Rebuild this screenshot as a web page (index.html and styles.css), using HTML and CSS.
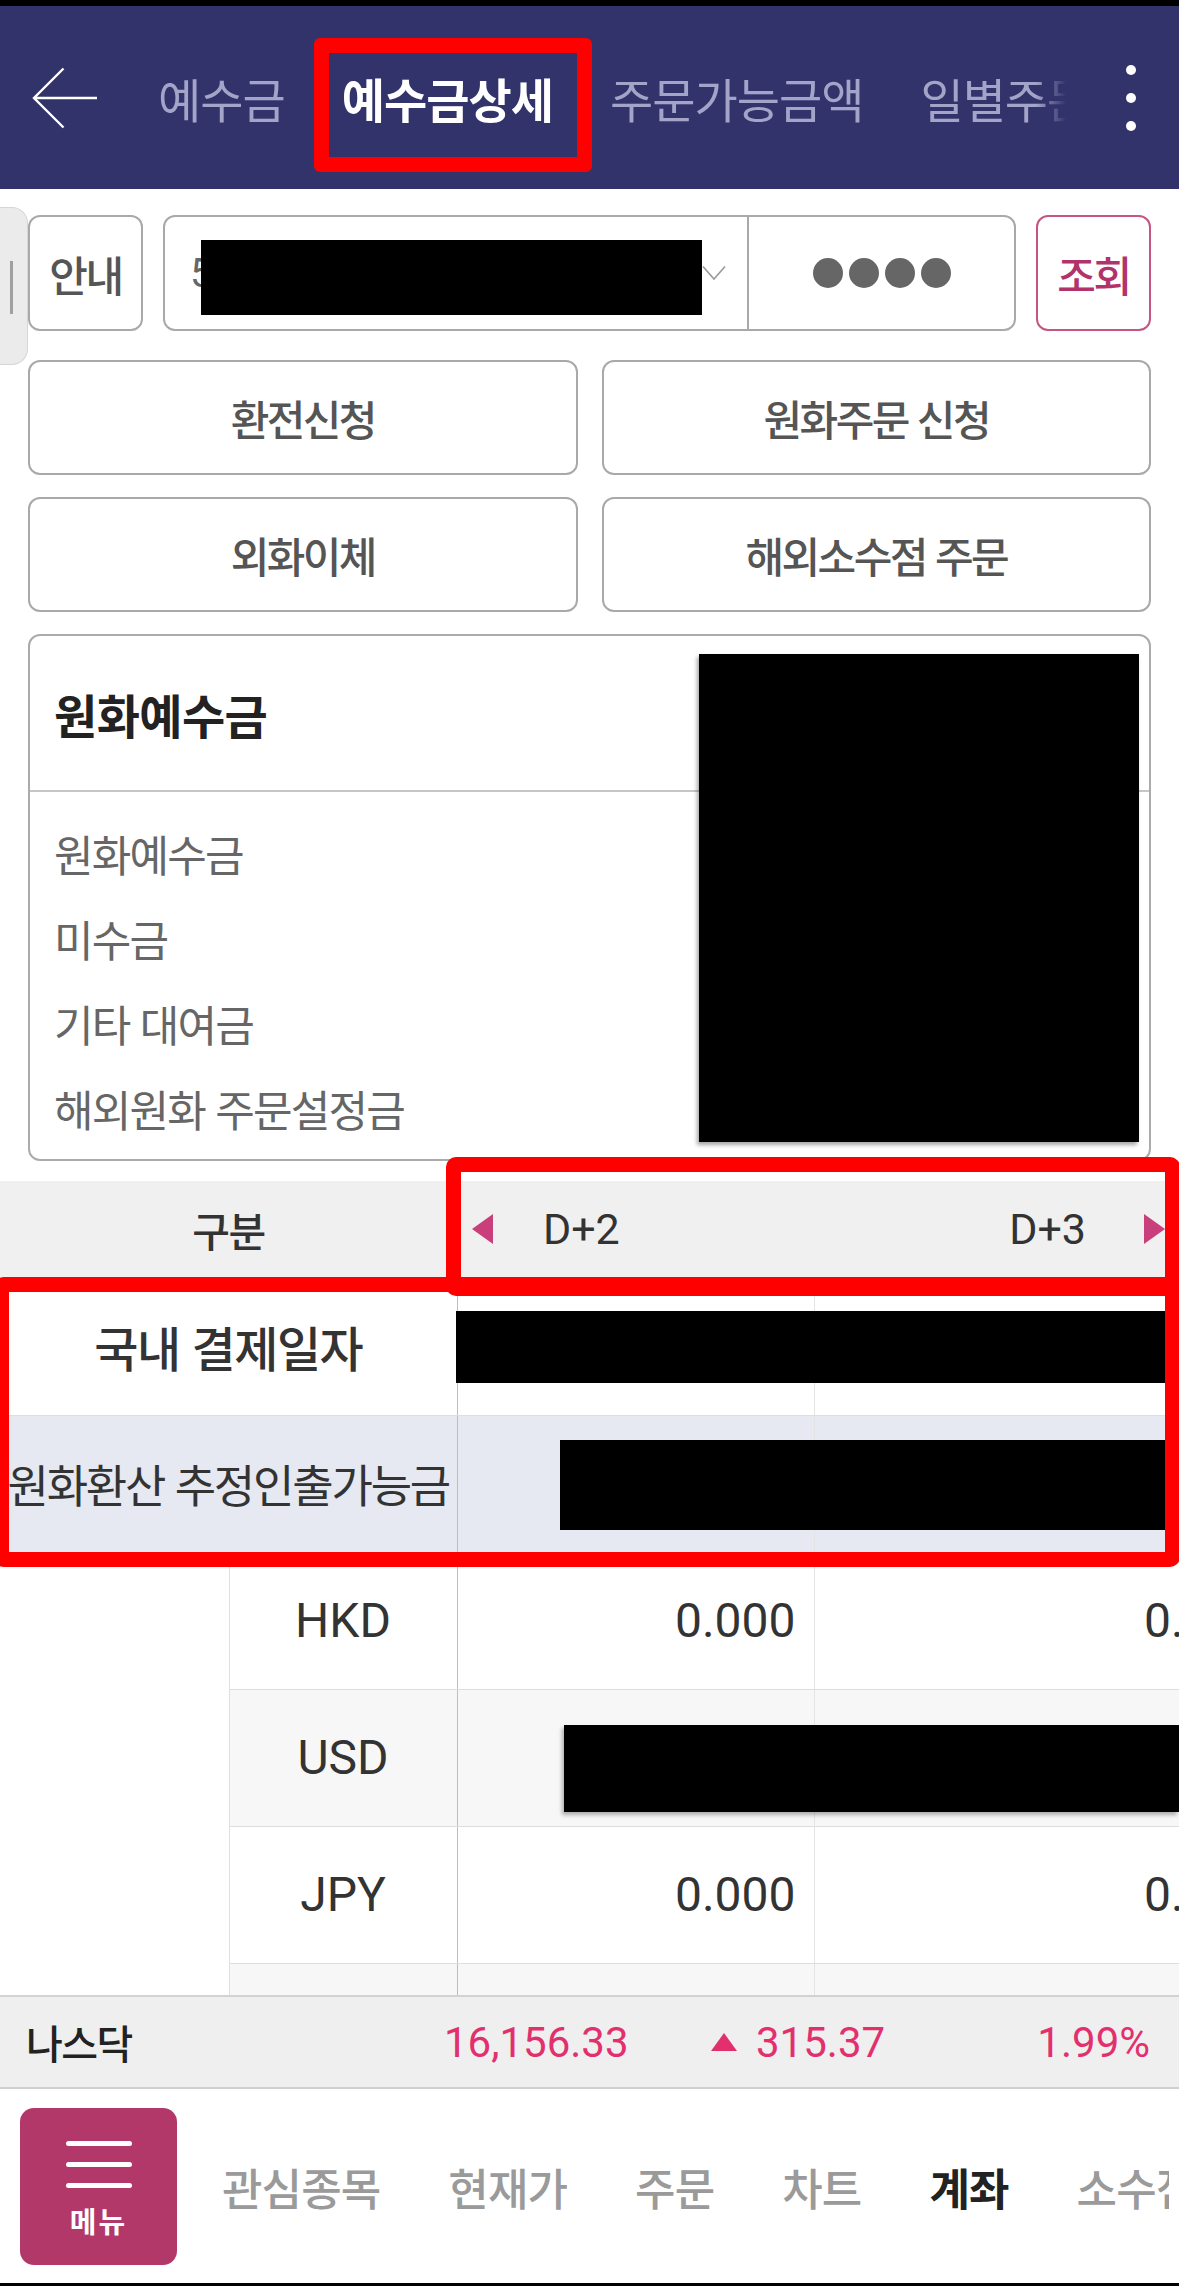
FILE: index.html
```html
<!DOCTYPE html>
<html lang="ko">
<head>
    <meta charset="utf-8">
    <title>예수금상세</title>
    <link rel="stylesheet" href="styles.css">
</head>
<body>
<div class="screen">
    <div class="status"></div>

    <header class="appbar">
        <svg class="back" width="66" height="62" viewBox="0 0 66 62">
            <path d="M65 31H2M31.5 1.5L2 31L31.5 60.5" fill="none" stroke="#fff" stroke-width="2.4"/>
        </svg>
        <nav class="tabs">
            <span class="tab">예수금</span>
            <span class="tab active">예수금상세</span>
            <span class="tab">주문가능금액</span>
            <span class="tab">일별주문체결</span>
        </nav>
        <div class="kebab"><i></i><i></i><i></i></div>
    </header>

    <main class="content">
        <div class="account-row">
            <button class="btn info">안내</button>
            <div class="account-box">
                <div class="account-select">
                    <span class="acct-no">5</span>
                    <svg class="chevron" width="24" height="16" viewBox="0 0 24 16">
                        <path d="M1 1.5L12 14L23 1.5" fill="none" stroke="#999" stroke-width="1.6"/>
                    </svg>
                    <div class="mask acct-mask"></div>
                </div>
                <div class="account-pw"><i></i><i></i><i></i><i></i></div>
            </div>
            <button class="btn search">조회</button>
        </div>

        <div class="quick">
            <button class="btn">환전신청</button>
            <button class="btn">원화주문 신청</button>
            <button class="btn">외화이체</button>
            <button class="btn">해외소수점 주문</button>
        </div>

        <section class="card">
            <div class="card-head">원화예수금</div>
            <ul class="card-list">
                <li>원화예수금</li>
                <li>미수금</li>
                <li>기타 대여금</li>
                <li>해외원화 주문설정금</li>
            </ul>
            <div class="mask card-mask"></div>
        </section>
    </main>

    <section class="sheet">
        <div class="sheet-head">
            <div class="label">구분</div>
            <div class="days">
                <svg width="21" height="30" viewBox="0 0 21 30"><path d="M21 0V30L0 15Z" fill="#c93f7b"/></svg>
                <span class="d2">D+2</span>
                <span class="d3">D+3</span>
                <svg width="21" height="30" viewBox="0 0 21 30"><path d="M0 0V30L21 15Z" fill="#c93f7b"/></svg>
            </div>
        </div>

        <table class="grid">
            <colgroup>
                <col class="w-blank"><col class="w-cur"><col class="w-d2"><col class="w-d3">
            </colgroup>
            <tbody>
                <tr class="row-date">
                    <td class="name lead strong" colspan="2">국내 결제일자</td>
                    <td class="val"></td>
                    <td class="val"></td>
                </tr>
                <tr class="row-krw">
                    <td class="name lead" colspan="2">원화환산 추정인출가능금</td>
                    <td class="val"></td>
                    <td class="val"></td>
                </tr>
                <tr class="row-cur">
                    <td class="blank" rowspan="4"></td>
                    <td class="cur lead">HKD</td>
                    <td class="val">0.000</td>
                    <td class="val">0.000</td>
                </tr>
                <tr class="row-cur alt">
                    <td class="cur lead">USD</td>
                    <td class="val"></td>
                    <td class="val"></td>
                </tr>
                <tr class="row-cur">
                    <td class="cur lead">JPY</td>
                    <td class="val">0.000</td>
                    <td class="val">0.000</td>
                </tr>
                <tr class="row-cur alt">
                    <td class="cur lead">EUR</td>
                    <td class="val">0.000</td>
                    <td class="val">0.000</td>
                </tr>
            </tbody>
        </table>

        <div class="mask sheet-mask-1"></div>
        <div class="mask sheet-mask-2"></div>
        <div class="mask sheet-mask-3"></div>
    </section>

    <div class="index">
        <span class="idx-name">나스닥</span>
        <span class="idx-value">16,156.33</span>
        <span class="idx-change">
            <svg width="26" height="18" viewBox="0 0 26 18"><path d="M13 0L26 18H0Z" fill="#e2306e"/></svg>
            315.37
        </span>
        <span class="idx-rate">1.99%</span>
    </div>

    <footer class="bottom-nav">
        <div class="menu-btn">
            <i></i><i></i><i></i>
            <span>메뉴</span>
        </div>
        <nav class="nav-items">
            <span>관심종목</span>
            <span>현재가</span>
            <span>주문</span>
            <span>차트</span>
            <span class="on">계좌</span>
            <span>소수점주문</span>
        </nav>
    </footer>

    <div class="home-strip"></div>

    <!-- side drawer handle -->
    <div class="edge-handle"><i></i></div>

    <!-- highlight marks drawn over the capture -->
    <div class="mark mark-tab"></div>
    <div class="mark mark-days"></div>
    <div class="mark mark-rows"></div>
</div>
</body>
</html>
```

FILE: styles.css
```css
* {
    box-sizing: border-box;
}
html, body {
    margin: 0;
    padding: 0;
}
body {
    width: 1179px;
    height: 2286px;
    overflow: hidden;
    background: #fff;
    font-family: "Noto Sans CJK KR", "Noto Sans", sans-serif;
}
.screen {
    position: relative;
    width: 1179px;
    height: 2286px;
    display: flex;
    flex-direction: column;
    overflow: hidden;
}
.status {
    flex: none;
    height: 6px;
    background: #000;
}

/* app bar */
.appbar {
    flex: none;
    height: 183px;
    background: #32336b;
    display: flex;
    align-items: center;
    padding-left: 32px;
}
.back {
    flex: none;
}
.tabs {
    display: flex;
    gap: 57px;
    margin-left: 60px;
    width: 908px;
    padding: 14px 0;
    overflow: hidden;
    white-space: nowrap;
    -webkit-mask-image: linear-gradient(to right, #000 calc(100% - 30px), transparent);
    mask-image: linear-gradient(to right, #000 calc(100% - 30px), transparent);
}
.tab {
    flex: none;
    font-size: 47px;
    line-height: 1.3;
    letter-spacing: -1px;
    color: #a3a4c8;
}
.tab.active {
    color: #fff;
    font-weight: 700;
}
.kebab {
    display: flex;
    flex-direction: column;
    gap: 18px;
    margin-left: 60px;
}
.kebab i {
    width: 10px;
    height: 10px;
    border-radius: 50%;
    background: #fff;
}

/* top form */
.content {
    flex: none;
    padding: 26px 28px 20px;
}
.btn {
    display: flex;
    align-items: center;
    justify-content: center;
    padding: 0;
    border: 2px solid #a9a9a9;
    border-radius: 12px;
    background: #fff;
    font-family: inherit;
    font-size: 42px;
    font-weight: 500;
    letter-spacing: -2.6px;
    color: #555;
}
.account-row {
    display: flex;
    gap: 20px;
    height: 116px;
}
.info {
    width: 115px;
    letter-spacing: -2.5px;
}
.account-box {
    width: 853px;
    display: flex;
    border: 2px solid #a9a9a9;
    border-radius: 12px;
}
.account-select {
    position: relative;
    width: 584px;
    display: flex;
    align-items: center;
    padding-left: 25px;
    border-right: 2px solid #a9a9a9;
}
.acct-no {
    font-family: Roboto, sans-serif;
    font-size: 40px;
    color: #666;
}
.chevron {
    margin-left: auto;
    margin-right: 21px;
}
.account-pw {
    flex: 1;
    display: flex;
    align-items: center;
    justify-content: center;
    gap: 6px;
}
.account-pw i {
    width: 30px;
    height: 30px;
    border-radius: 50%;
    background: #666;
}
.search {
    width: 115px;
    border-color: #c55682;
    color: #b2336a;
    letter-spacing: -2.5px;
}
.quick {
    display: grid;
    grid-template-columns: 1fr 1fr;
    column-gap: 24px;
    row-gap: 22px;
    margin-top: 29px;
}
.quick .btn {
    height: 115px;
}

/* deposit card */
.card {
    position: relative;
    height: 527px;
    margin-top: 22px;
    border: 2px solid #ababab;
    border-radius: 12px;
}
.card-head {
    height: 156px;
    display: flex;
    align-items: center;
    padding-left: 24px;
    border-bottom: 2px solid #c6c6c6;
    font-size: 47px;
    font-weight: 700;
    letter-spacing: -0.6px;
    color: #222;
}
.card-list {
    list-style: none;
    margin: 0;
    padding: 18px 0 0 24px;
}
.card-list li {
    height: 85px;
    display: flex;
    align-items: center;
    font-size: 43px;
    letter-spacing: -1.8px;
    color: #666;
}

/* redactions */
.mask {
    position: absolute;
    background: #000;
}
.acct-mask {
    left: 36px;
    top: 23px;
    width: 501px;
    height: 75px;
}
.card-mask {
    left: 669px;
    top: 18px;
    width: 440px;
    height: 488px;
    box-shadow: -2px 3px 4px rgba(0, 0, 0, 0.35);
}
.sheet-mask-1 {
    left: 456px;
    top: 130px;
    width: 723px;
    height: 72px;
}
.sheet-mask-2 {
    left: 560px;
    top: 259px;
    width: 609px;
    height: 90px;
}
.sheet-mask-3 {
    left: 564px;
    top: 544px;
    width: 615px;
    height: 87px;
    box-shadow: -2px 3px 4px rgba(0, 0, 0, 0.3);
}

/* settlement sheet */
.sheet {
    position: relative;
    flex: 1;
    overflow: hidden;
}
.sheet-head {
    height: 96px;
    display: flex;
    align-items: center;
    background: #f0f0f0;
}
.sheet-head .label {
    width: 457px;
    text-align: center;
    font-size: 41px;
    font-weight: 500;
    letter-spacing: -1.5px;
    color: #333;
}
.days {
    flex: 1;
    display: flex;
    align-items: center;
    padding: 0 14px 0 15px;
    font-family: Roboto, sans-serif;
    font-size: 43px;
    color: #333;
}
.days .d2 {
    margin-left: 50px;
}
.days .d3 {
    margin-left: auto;
    margin-right: 58px;
}
.grid {
    width: 1283px;
    border-collapse: collapse;
    table-layout: fixed;
}
.w-blank { width: 229px; }
.w-cur { width: 228px; }
.w-d2 { width: 357px; }
.w-d3 { width: 469px; }
.grid td {
    padding: 0;
    border-bottom: 1px solid #dedede;
    border-right: 1px solid #e4e4e4;
    color: #333;
}
.grid .lead {
    border-right: 1px solid #bdbdbd;
}
.row-date td {
    height: 138px;
}
.row-krw td {
    height: 137px;
    background: #e6e9f1;
}
.row-cur td {
    height: 137px;
}
.row-cur.alt td {
    background: #f7f7f7;
}
.grid .blank {
    background: #fff;
    border-bottom: none;
    border-right: 1px solid #e0e0e0;
}
.name {
    text-align: center;
    font-size: 45px;
    letter-spacing: -2.2px;
    white-space: nowrap;
}
.name.strong {
    font-size: 48px;
    font-weight: 500;
    letter-spacing: -1.5px;
}
.cur {
    text-align: center;
    font-family: Roboto, sans-serif;
    font-size: 48px;
}
.val {
    text-align: right;
    padding-right: 18px !important;
    font-family: Roboto, sans-serif;
    font-size: 48px;
}

/* index ticker */
.index {
    flex: none;
    height: 94px;
    display: flex;
    align-items: center;
    padding: 0 29px 0 26px;
    background: #efefef;
    border-top: 2px solid #d2d2d2;
    border-bottom: 2px solid #cfcfcf;
    font-family: Roboto, "Noto Sans CJK KR", sans-serif;
    font-size: 42px;
    color: #e2306e;
}
.idx-name {
    width: 418px;
    font-family: "Noto Sans CJK KR", sans-serif;
    font-size: 40px;
    font-weight: 500;
    letter-spacing: -1.5px;
    color: #222;
}
.idx-value {
    width: 267px;
}
.idx-change {
    display: flex;
    align-items: center;
    gap: 19px;
}
.idx-rate {
    margin-left: auto;
}

/* bottom navigation */
.bottom-nav {
    flex: none;
    height: 194px;
    display: flex;
    align-items: flex-start;
    padding: 19px 0 0 20px;
}
.menu-btn {
    flex: none;
    width: 157px;
    height: 157px;
    display: flex;
    flex-direction: column;
    align-items: center;
    gap: 16px;
    padding-top: 33px;
    border-radius: 14px;
    background: #b3386a;
}
.menu-btn i {
    width: 66px;
    height: 5px;
    border-radius: 3px;
    background: #fff;
}
.menu-btn span {
    margin-top: 2px;
    font-size: 29px;
    line-height: 1;
    font-weight: 700;
    letter-spacing: 2px;
    color: #fff;
}
.nav-items {
    flex: 1;
    height: 157px;
    display: flex;
    align-items: center;
    gap: 68px;
    margin-left: 45px;
    margin-right: 10px;
    overflow: hidden;
    white-space: nowrap;
}
.nav-items span {
    flex: none;
    font-size: 44px;
    font-weight: 500;
    letter-spacing: -0.9px;
    color: #9a9a9a;
}
.nav-items .on {
    font-weight: 700;
    color: #222;
}
.home-strip {
    flex: none;
    height: 3px;
    background: #000;
}

/* overlays */
.edge-handle {
    position: absolute;
    left: 0;
    top: 207px;
    width: 28px;
    height: 158px;
    background: #ebebeb;
    border: 1px solid #d6d6d6;
    border-left: none;
    border-radius: 0 16px 16px 0;
}
.edge-handle i {
    position: absolute;
    left: 10px;
    top: 53px;
    width: 3px;
    height: 53px;
    background: #a0a0a0;
}
.mark {
    position: absolute;
    border: 15px solid #fe0000;
    border-radius: 10px;
}
.mark-tab {
    left: 314px;
    top: 38px;
    width: 278px;
    height: 134px;
    border-radius: 6px;
}
.mark-days {
    left: 446px;
    top: 1157px;
    width: 734px;
    height: 139px;
}
.mark-rows {
    left: -6px;
    top: 1277px;
    width: 1186px;
    height: 290px;
}
```
